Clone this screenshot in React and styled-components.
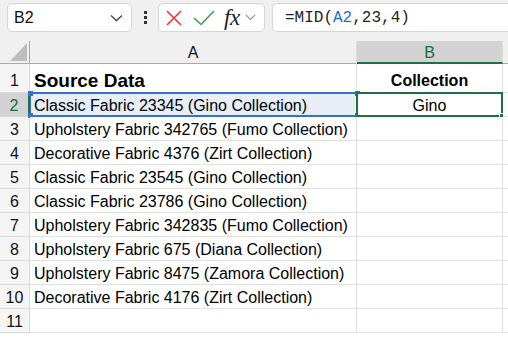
import React from "react";
import styled, { createGlobalStyle } from "styled-components";

const Global = createGlobalStyle`
  html, body { margin: 0; padding: 0; background: #ffffff; }
  body { font-family: "Liberation Sans", Arial, sans-serif; overflow: hidden; }
  * { box-sizing: border-box; }
`;

const Page = styled.div`
  width: 508px;
  height: 339px;
  overflow: hidden;
  display: flex;
  flex-direction: column;
`;

const Toolbar = styled.div`
  height: 41px;
  background: #f0f0f0;
  display: flex;
  align-items: flex-start;
  padding: 3px 0 0 7px;
  flex: none;
`;

const NameBox = styled.div`
  width: 125px;
  height: 29px;
  background: #fff;
  border: 1px solid #d6d6d6;
  border-radius: 5px;
  display: flex;
  align-items: center;
  justify-content: space-between;
  padding: 1px 8px 0 6px;
  font-size: 16px;
  color: #111;
`;

const Dots = styled.div`
  width: 26px;
  height: 29px;
  display: flex;
  flex-direction: column;
  align-items: center;
  justify-content: center;
  gap: 2px;
  & > span {
    width: 3px;
    height: 3px;
    background: #333;
  }
`;

const FxBox = styled.div`
  width: 107px;
  height: 29px;
  background: #fff;
  border: 1px solid #d6d6d6;
  border-radius: 5px;
  display: flex;
  align-items: center;
  padding: 0 0 0 6px;
`;

const FxText = styled.span`
  font-family: "Liberation Serif", "Times New Roman", serif;
  font-style: italic;
  font-size: 23px;
  color: #222;
  margin-left: 9px;
  letter-spacing: -0.5px;
  line-height: 1;
`;

const FormulaBox = styled.div`
  flex: 1;
  height: 29px;
  margin-left: 7px;
  background: #fff;
  border: 1px solid #d6d6d6;
  border-right: none;
  border-radius: 5px 0 0 5px;
  display: flex;
  align-items: center;
  padding-left: 12px;
  font-family: "Liberation Mono", "DejaVu Sans Mono", monospace;
  font-size: 16px;
  color: #222;
`;

const Ref = styled.span`
  color: #1f6ec9;
`;

const Sheet = styled.div`
  display: grid;
  grid-template-columns: 30px 327px 146px 1fr;
  grid-template-rows: 23px 29px repeat(11, 24px);
  font-size: 16px;
  color: #000;
`;

const Corner = styled.div`
  background: #f0f0f0;
  border-right: 1px solid #a8a8a8;
  border-bottom: 1px solid #a8a8a8;
  padding: 2px 0 0 10px;
`;

const ColHead = styled.div`
  background: ${(p) => (p.active ? "#d3d3d3" : "#f0f0f0")};
  color: ${(p) => (p.active ? "#1d6b3e" : "#111")};
  border-right: 1px solid #dadada;
  border-bottom: ${(p) => (p.active ? "2px solid #1e7145" : "1px solid #a8a8a8")};
  display: flex;
  align-items: center;
  justify-content: center;
  font-size: 16px;
  padding-top: ${(p) => (p.active ? "2px" : "1px")};
`;

const RowHead = styled.div`
  background: ${(p) => (p.active ? "#d3d3d3" : "#f5f5f5")};
  color: ${(p) => (p.active ? "#1d6b3e" : "#111")};
  border-right: ${(p) => (p.active ? "2px solid #1e7145" : "1px solid #dadada")};
  border-bottom: 1px solid #dadada;
  display: flex;
  align-items: center;
  justify-content: center;
  font-size: 16px;
  padding-top: ${(p) => (p.tall ? "6px" : "2px")};
`;

const Cell = styled.div`
  position: relative;
  background: ${(p) => (p.hilite ? "#e8eef8" : "#fff")};
  border-right: 1px solid #e1e1e1;
  border-bottom: 1px solid #e1e1e1;
  display: flex;
  align-items: center;
  justify-content: ${(p) => (p.center ? "center" : "flex-start")};
  padding: ${(p) => (p.tall ? "6px" : "2px")} 4px 0;
  white-space: nowrap;
  font-weight: ${(p) => (p.bold ? 700 : 400)};
  font-size: ${(p) => p.size || 16}px;
`;

const RefBorder = styled.div`
  position: absolute;
  left: 0;
  top: -1px;
  right: -1px;
  bottom: -1px;
  border-top: 2px solid #3a6fc6;
  border-bottom: 2px solid #3a6fc6;
  border-left: 1px solid #3a6fc6;
  pointer-events: none;
`;

const Handle = styled.span`
  position: absolute;
  width: 5px;
  height: 5px;
  background: ${(p) => p.color};
  ${(p) => p.pos}
`;

const SelBorder = styled.div`
  position: absolute;
  left: -1px;
  top: -1px;
  right: -1px;
  bottom: -1px;
  border: 2px solid #1e7145;
  pointer-events: none;
`;

const rows = [
  "Classic Fabric 23345 (Gino Collection)",
  "Upholstery Fabric 342765 (Fumo Collection)",
  "Decorative Fabric 4376 (Zirt Collection)",
  "Classic Fabric 23545 (Gino Collection)",
  "Classic Fabric 23786 (Gino Collection)",
  "Upholstery Fabric 342835 (Fumo Collection)",
  "Upholstery Fabric 675 (Diana Collection)",
  "Upholstery Fabric 8475 (Zamora Collection)",
  "Decorative Fabric 4176 (Zirt Collection)",
  "",
];

export default function App() {
  return (
    <Page>
      <Global />
      <Toolbar>
        <NameBox>
          <span>B2</span>
          <svg width="13" height="8" viewBox="0 0 13 8">
            <path d="M1 1.5 L6.5 6.5 L12 1.5" fill="none" stroke="#444" strokeWidth="1.3" />
          </svg>
        </NameBox>
        <Dots>
          <span />
          <span />
          <span />
        </Dots>
        <FxBox>
          <svg width="18" height="18" viewBox="0 0 18 18">
            <path d="M2 2 L16 16 M16 2 L2 16" stroke="#e8333a" strokeWidth="1.6" />
          </svg>
          <svg width="22" height="18" viewBox="0 0 22 18" style={{ marginLeft: 10 }}>
            <path d="M1 9 L8 15.5 L21 2" fill="none" stroke="#3aa150" strokeWidth="1.6" />
          </svg>
          <FxText>fx</FxText>
          <svg width="11" height="7" viewBox="0 0 11 7" style={{ marginLeft: 5 }}>
            <path d="M1 1 L5.5 5.5 L10 1" fill="none" stroke="#9a9a9a" strokeWidth="1.2" />
          </svg>
        </FxBox>
        <FormulaBox>
          =MID(<Ref>A2</Ref>,23,4)
        </FormulaBox>
      </Toolbar>
      <Sheet>
        <Corner>
          <svg width="17" height="18" viewBox="0 0 17 18">
            <path d="M17 0 L17 18 L0 18 Z" fill="#bdbdbd" />
          </svg>
        </Corner>
        <ColHead>A</ColHead>
        <ColHead active>B</ColHead>
        <ColHead />

        <RowHead tall>1</RowHead>
        <Cell bold size={19} tall>Source Data</Cell>
        <Cell bold center tall size={16}>Collection</Cell>
        <Cell />

        {rows.map((text, i) => {
          const n = i + 2;
          const first = n === 2;
          return (
            <React.Fragment key={n}>
              <RowHead active={first}>{n}</RowHead>
              <Cell hilite={first}>
                {text}
                {first && (
                  <RefBorder>
                    <Handle color="#3a6fc6" pos="left: -3px; top: -3px;" />
                    <Handle color="#3a6fc6" pos="right: -3px; top: -3px;" />
                    <Handle color="#3a6fc6" pos="left: -3px; bottom: -3px;" />
                    <Handle color="#3a6fc6" pos="right: -3px; bottom: -3px;" />
                  </RefBorder>
                )}
              </Cell>
              <Cell center>
                {first && "Gino"}
                {first && (
                  <SelBorder>
                    <Handle color="#1e7145" pos="right: -4px; bottom: -4px; width: 6px; height: 6px; border: 1px solid #fff;" />
                  </SelBorder>
                )}
              </Cell>
              <Cell />
            </React.Fragment>
          );
        })}
      </Sheet>
    </Page>
  );
}
